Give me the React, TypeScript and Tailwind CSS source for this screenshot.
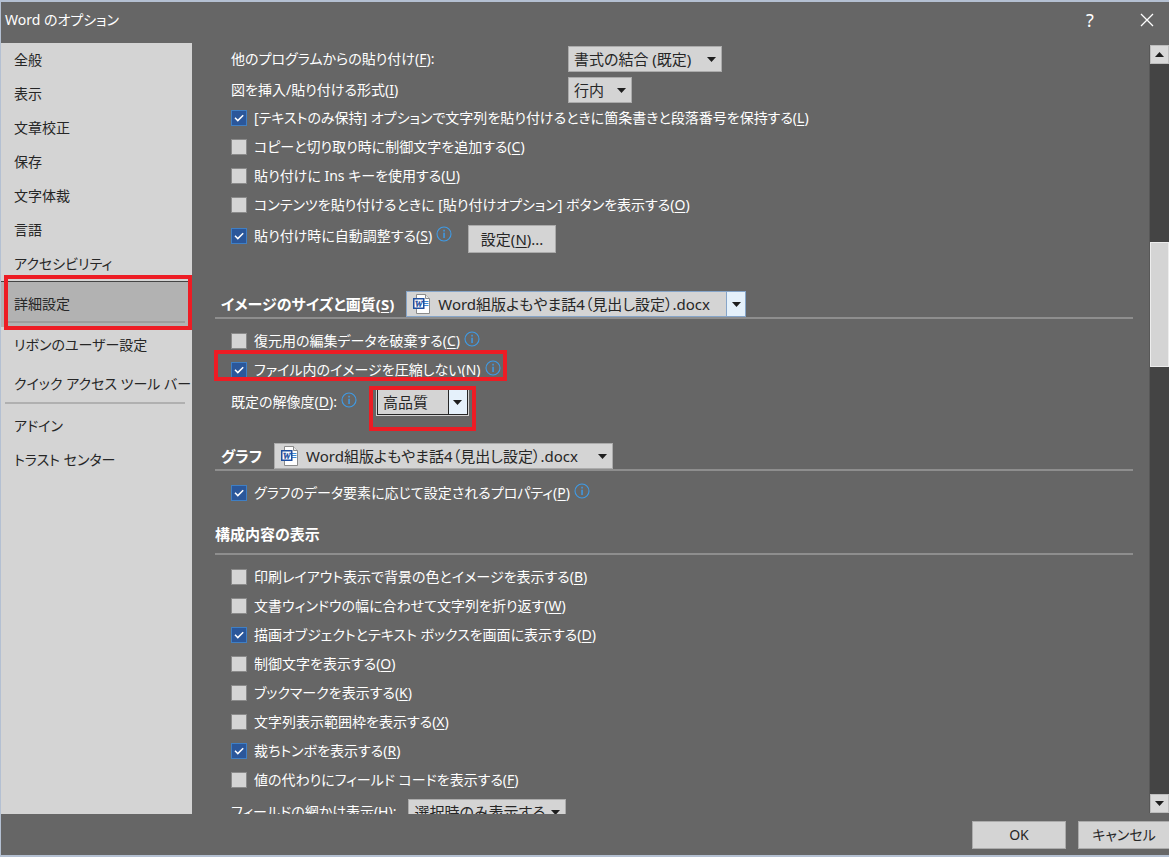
import { useState } from "react";
import type { ReactNode } from "react";
import clsx from "clsx";

const DOC_NAME = "Word組版よもやま話4（見出し設定）.docx";

// Underlines the access key in labels such as "保存(S)"
function KeyText({ text }: { text: string }) {
  const m = text.match(/^(.*\()([A-Z])(\).*)$/);
  if (!m) return <>{text}</>;
  return (
    <>
      {m[1]}
      <u className="underline decoration-1 underline-offset-2">{m[2]}</u>
      {m[3]}
    </>
  );
}

function InfoIcon() {
  return (
    <svg viewBox="0 0 16 16" className="mb-1 size-4 shrink-0" aria-hidden="true">
      <circle cx="8" cy="8" r="7" fill="none" stroke="#3f9be6" strokeWidth="1.1" />
      <rect x="7.3" y="3.8" width="1.5" height="1.7" fill="#3f9be6" />
      <rect x="7.3" y="6.7" width="1.5" height="5.3" fill="#3f9be6" />
    </svg>
  );
}

function WordIcon() {
  return (
    <svg viewBox="0 0 18 20" className="pointer-events-none absolute left-[7px] top-[3px] h-5 w-[18px]" aria-hidden="true">
      <path d="M3.5 .5h9l4 4v15h-13z" fill="#fff" stroke="#8b8b8b" />
      <path d="M12.5 .5v4h4" fill="#e8e8e8" stroke="#8b8b8b" />
      <path d="M11 7.5h4.500M11 9.500h4.500M11 11.500h4.500" stroke="#3b8bd4" />
      <rect x="0.75" y="4.750" width="10" height="9.500" fill="#fff" stroke="#1f4e9e" strokeWidth="1.5" />
      <text x="5.700" y="12.800" textAnchor="middle" fontSize="9" fontWeight="bold" fontStyle="italic" fontFamily="Liberation Serif, serif" fill="#1f4e9e" stroke="#1f4e9e" strokeWidth="0.3">
        W
      </text>
    </svg>
  );
}

function Check({ text, on = false, info = false }: { text: string; on?: boolean; info?: boolean }) {
  const [checked, setChecked] = useState(on);
  return (
    <div className="flex h-[29px] items-center gap-1">
      <label className="flex items-center gap-[7px]">
        <span className="grid size-4 place-items-center">
          <input
            type="checkbox"
            checked={checked}
            onChange={(e) => setChecked(e.target.checked)}
            className="col-start-1 row-start-1 size-4 appearance-none border border-[#8a8a8a] bg-[#d4d4d4] checked:border-[#3f7fc4] checked:bg-[#2b579a]"
          />
          {checked && (
            <svg viewBox="0 0 16 16" className="pointer-events-none col-start-1 row-start-1 size-4">
              <path d="M4 7.8l2.8 2.8 5.4-5.4" fill="none" stroke="#fff" strokeWidth="1.5" />
            </svg>
          )}
        </span>
        <span>
          <KeyText text={text} />
        </span>
      </label>
      {info && <InfoIcon />}
    </div>
  );
}

type DropProps = {
  id: string;
  value: string;
  width: string;
  doc?: boolean;
  tone?: "plain" | "hot" | "open";
};

function Drop({ id, value, width, doc, tone = "plain" }: DropProps) {
  return (
    <div className={clsx("relative h-[26px] shrink-0 text-[15px]", width)}>
      <select
        id={id}
        className={clsx(
          "block size-full appearance-none border bg-[#d4d4d4] pr-5 text-[#262626]",
          doc ? "pl-[31px]" : "pl-[5px]",
          tone === "plain" && "border-[#ababab]",
          tone === "hot" && "border-[#86a5c9]",
          tone === "open" && "border-[#262626] outline outline-[#d4d4d4]"
        )}
      >
        <option>{value}</option>
      </select>
      {doc && <WordIcon />}
      <span
        className={clsx(
          "pointer-events-none absolute inset-y-px right-px grid w-[19px] place-items-center",
          tone === "hot" && "border-l border-[#86a5c9] bg-[#e5f1fb]",
          tone === "open" && "border-l border-[#262626] bg-[#e5f1fb]"
        )}
      >
        <svg viewBox="0 0 9 5" className="h-[5px] w-[9px]">
          <path d="M0 0h9l-4.500 5z" fill="#1e1e1e" />
        </svg>
      </span>
    </div>
  );
}

function Heading({ id, text, children }: { id?: string; text: string; children?: ReactNode }) {
  return (
    <div className="flex h-7 items-center gap-3 border-b-2 border-[#8e8e8e] pl-1.5 text-[15px] font-bold">
      <label htmlFor={id}>
        <KeyText text={text} />
      </label>
      <div className="font-normal">{children}</div>
    </div>
  );
}

function Mark({ className }: { className: string }) {
  return <div className={clsx("pointer-events-none absolute z-10 border-4 border-[#ed1c24]", className)} />;
}

function NavItem({ text }: { text: string }) {
  return (
    <button type="button" className="block h-[34px] w-full whitespace-nowrap pl-[13px] text-left">
      {text}
    </button>
  );
}

function Sidebar() {
  return (
    <nav className="w-[191px] shrink-0 bg-[#d4d4d4] text-[#262626]">
      {["全般", "表示", "文章校正", "保存", "文字体裁", "言語", "アクセシビリティ"].map((t) => (
        <NavItem key={t} text={t} />
      ))}
      <div className="relative h-[46px] border-t border-[#444] bg-[#b2b2b2]">
        <button type="button" aria-current="page" className="block h-[39px] w-full pl-[13px] pt-1 text-left">
          詳細設定
        </button>
        <hr className="ml-1 mr-[7px] border-t-2 border-[#9c9c9c]" />
        <Mark className="-bottom-[3px] -top-[7px] left-[3px] right-0" />
      </div>
      <div className="flex flex-col gap-[5px] py-px">
        <NavItem text="リボンのユーザー設定" />
        <NavItem text="クイック アクセス ツール バー" />
      </div>
      <hr className="mb-[5px] ml-1 mr-[7px] border-t-2 border-[#b0b0b0]" />
      <NavItem text="アドイン" />
      <NavItem text="トラスト センター" />
    </nav>
  );
}

function Scrollbar() {
  return (
    <div className="flex w-5 shrink-0 flex-col border-l border-[#585858] bg-[#444]">
      <button type="button" aria-label="上へスクロール" className="grid h-[19px] place-items-center border border-[#bdbdbd] bg-[#d9d9d9]">
        <svg viewBox="0 0 9 5" className="h-[5px] w-[9px]">
          <path d="M0 5h9L4.500 0z" fill="#1e1e1e" />
        </svg>
      </button>
      <div className="flex flex-1 flex-col">
        <div className="grow-[178]" />
        <div className="grow-[123] border border-[#ededed] bg-[#d4d4d4]" />
        <div className="grow-[427]" />
      </div>
      <button type="button" aria-label="下へスクロール" className="grid h-[19px] place-items-center border border-[#bdbdbd] bg-[#d9d9d9]">
        <svg viewBox="0 0 9 5" className="h-[5px] w-[9px]">
          <path d="M0 0h9L4.500 5z" fill="#1e1e1e" />
        </svg>
      </button>
    </div>
  );
}

function Options() {
  return (
    <main className="min-w-0 flex-1 overflow-hidden pl-[23px] pr-4">
      {/* 切り取り、コピー、貼り付け */}
      <div className="pl-4 pt-[3px]">
        <div className="flex flex-col gap-[5px]">
          <div className="flex h-[26px] items-center">
            <label htmlFor="paste" className="w-[337px]">
              <KeyText text="他のプログラムからの貼り付け(F):" />
            </label>
            <Drop id="paste" value="書式の結合 (既定)" width="w-[154px]" />
          </div>
          <div className="flex h-[26px] items-center">
            <label htmlFor="picture" className="w-[337px]">
              <KeyText text="図を挿入/貼り付ける形式(I)" />
            </label>
            <Drop id="picture" value="行内" width="w-16" />
          </div>
        </div>
        <Check on text="[テキストのみ保持] オプションで文字列を貼り付けるときに箇条書きと段落番号を保持する(L)" />
        <Check text="コピーと切り取り時に制御文字を追加する(C)" />
        <Check text="貼り付けに Ins キーを使用する(U)" />
        <Check text="コンテンツを貼り付けるときに [貼り付けオプション] ボタンを表示する(O)" />
        <div className="mt-0.5 flex h-8 items-start gap-4">
          <Check on info text="貼り付け時に自動調整する(S)" />
          <button type="button" className="h-7 w-[88px] self-end border border-[#ababab] bg-[#d4d4d4] text-[15px] text-[#262626]">
            <KeyText text="設定(N)..." />
          </button>
        </div>
      </div>

      <div className="mt-[38px]">
        <Heading id="imgdoc" text="イメージのサイズと画質(S)">
          <Drop id="imgdoc" value={DOC_NAME} width="w-[340px]" doc tone="hot" />
        </Heading>
        <div className="pl-4 pt-[7px]">
          <Check info text="復元用の編集データを破棄する(C)" />
          <div className="relative w-fit">
            <Check on info text="ファイル内のイメージを圧縮しない(N)" />
            <Mark className="-left-[17px] -right-1.5 -top-[5px] bottom-[3px]" />
          </div>
          <div className="flex h-9 items-center gap-5">
            <div className="flex items-center gap-1">
              <label htmlFor="dpi">
                <KeyText text="既定の解像度(D):" />
              </label>
              <InfoIcon />
            </div>
            <div className="relative">
              <Drop id="dpi" value="高品質" width="w-[91px]" tone="open" />
              <Mark className="-bottom-4 -left-2 -right-2 -top-[3px]" />
            </div>
          </div>
        </div>
      </div>

      <div className="mt-[23px]">
        <Heading id="chartdoc" text="グラフ">
          <Drop id="chartdoc" value={DOC_NAME} width="w-[339px]" doc />
        </Heading>
        <div className="pl-4 pt-[7px]">
          <Check on info text="グラフのデータ要素に応じて設定されるプロパティ(P)" />
        </div>
      </div>

      <h2 className="mt-3 h-9 border-b-2 border-[#8e8e8e] pt-[5px] text-[15px] font-bold">構成内容の表示</h2>
      <div className="pl-4 pt-[7px]">
        <Check text="印刷レイアウト表示で背景の色とイメージを表示する(B)" />
        <Check text="文書ウィンドウの幅に合わせて文字列を折り返す(W)" />
        <Check on text="描画オブジェクトとテキスト ボックスを画面に表示する(D)" />
        <Check text="制御文字を表示する(O)" />
        <Check text="ブックマークを表示する(K)" />
        <Check text="文字列表示範囲枠を表示する(X)" />
        <Check on text="裁ちトンボを表示する(R)" />
        <Check text="値の代わりにフィールド コードを表示する(F)" />
        <div className="mt-[5px] flex items-center gap-3">
          <label htmlFor="shade">
            <KeyText text="フィールドの網かけ表示(H):" />
          </label>
          <Drop id="shade" value="選択時のみ表示する" width="w-[158px]" />
        </div>
      </div>
    </main>
  );
}

export default function App() {
  return (
    <div className="flex h-screen flex-col overflow-hidden border-b-2 border-l border-t-2 border-[#b4c0d2] bg-[#666] font-['Noto_Sans','Noto_Sans_CJK_JP',sans-serif] text-[14px] leading-5 text-white [font-feature-settings:'palt']">
      <header className="flex h-[41px] shrink-0 items-center justify-between pb-1.5 pl-1 pr-[15px]">
        <h1>Word のオプション</h1>
        <div className="flex items-center gap-10">
          <button type="button" aria-label="ヘルプ" className="w-5 text-lg">
            ?
          </button>
          <button type="button" aria-label="閉じる">
            <svg viewBox="0 0 14 14" className="size-3.5">
              <path d="M1 1l12 12M13 1L1 13" stroke="#fff" strokeWidth="1.3" />
            </svg>
          </button>
        </div>
      </header>
      <div className="flex min-h-0 flex-1">
        <Sidebar />
        <Options />
        <div className="flex pb-px pt-0.5">
          <Scrollbar />
        </div>
      </div>
      <footer className="flex h-[41px] shrink-0 justify-end gap-3 pt-[7px]">
        <button type="button" className="h-7 w-[94px] border border-[#ababab] bg-[#d4d4d4] text-[#262626]">
          OK
        </button>
        <button type="button" className="h-7 w-[91px] border border-r-0 border-[#ababab] bg-[#d4d4d4] text-[#262626]">
          キャンセル
        </button>
      </footer>
    </div>
  );
}
